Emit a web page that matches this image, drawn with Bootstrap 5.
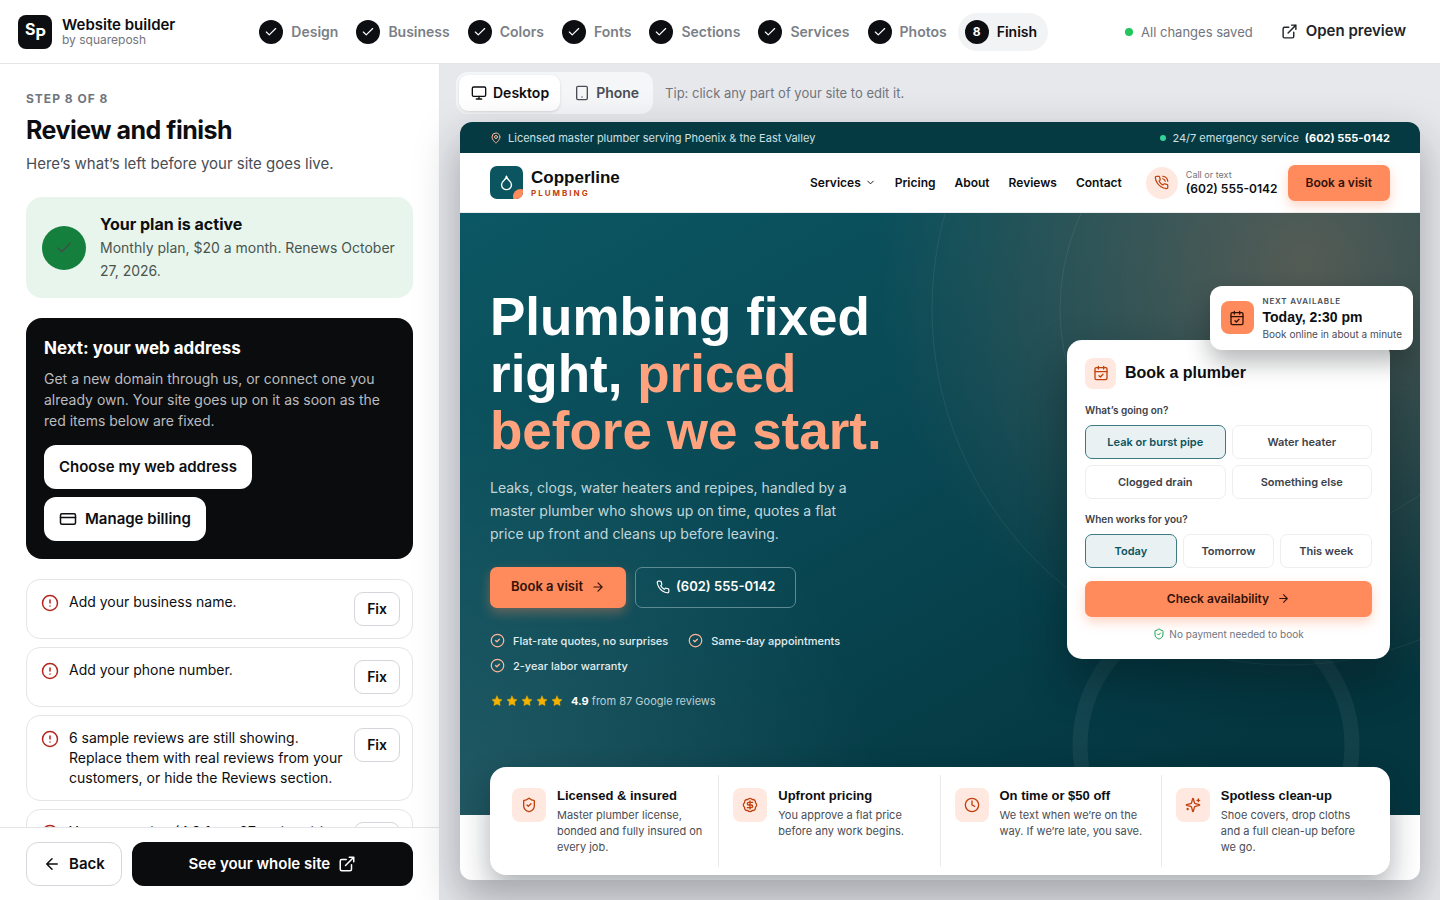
<!DOCTYPE html>
<html lang="en">
<head>
<meta charset="utf-8">
<meta name="viewport" content="width=device-width, initial-scale=1">
<title>Website builder</title>
<link rel="stylesheet" href="https://cdn.jsdelivr.net/npm/bootstrap@5.3.0/dist/css/bootstrap.min.css">
<style>
:root{--ink:#0d0e11;--muted:#71757d;--body:#494d55;--line:#e3e5e8;--teal:#0b5560;--orange:#ff8a5b;--rust:#c2410c;--peach:#ffe8df}
body{font-family:Inter,"Liberation Sans",sans-serif;color:var(--ink);background:#fff;font-size:14px;line-height:20px}
svg{display:block;flex:none;fill:none;stroke:currentColor;stroke-width:2;stroke-linecap:round;stroke-linejoin:round}
a{color:inherit;text-decoration:none}
.display-face{font-family:"Liberation Sans",Inter,sans-serif;font-weight:700}
/* app header */
.app-head{height:64px;border-bottom:1px solid var(--line);padding:0 18px}
.brand-mark{width:34px;height:34px;border-radius:8px;background:var(--ink);overflow:hidden}
.brand-mark text{font:700 16px Inter,sans-serif;fill:#fff;stroke:none}
.brand-name{font-size:15px;font-weight:600;line-height:17px}
.brand-sub{font-size:12px;line-height:14px;color:var(--muted)}
.step-link{padding:7px 11px 7px 7px;border-radius:19px;font-weight:600;color:#7b7f87;gap:8px}
.step-link.current{background:#f2f3f5;color:var(--ink)}
.step-dot{width:24px;height:24px;border-radius:50%;background:var(--ink);color:#fff;font-size:12px;font-weight:700}
.saved{font-size:13px;color:var(--muted);gap:8px}
.saved i{width:8px;height:8px;border-radius:50%;background:#22c55e}
.plain-btn{font-size:15px;font-weight:600;padding:8px 16px;gap:8px;border:0}
/* side panel */
.side{flex:0 0 440px;border-right:1px solid var(--line)}
.side-scroll{overflow:hidden;padding:26px 26px 0}
.eyebrow{font-size:12px;font-weight:700;letter-spacing:1px;line-height:18px;color:var(--muted)}
.side h1{font-size:25px;font-weight:700;line-height:32px;letter-spacing:-.5px;margin:6px 0}
.side-sub{font-size:15px;line-height:24px;color:var(--body);margin-bottom:21px}
.plan{background:#e8f5ec;border-radius:16px;padding:16px;gap:14px;margin-bottom:20px}
.plan-dot{width:44px;height:44px;border-radius:50%;background:#15803d;color:#3d5148;flex:none}
.plan-title{font-size:16px;font-weight:700;line-height:23px}
.plan-text{line-height:23px;color:#4a544f}
.next-card{background:#0b0c0e;color:#fff;border-radius:16px;padding:18px;margin-bottom:20px}
.next-card h2{font-size:17px;font-weight:700;line-height:24px;margin:0 0 8px}
.next-card p{line-height:21px;color:#b9bbbf;margin:0 0 14px}
.big-btn{height:44px;border-radius:12px;font-size:15px;font-weight:600;padding:0 14px;gap:8px}
.white-btn,.white-btn:hover{background:#fff;color:var(--ink)}
.dark-btn,.dark-btn:hover{background:#0b0c0e;color:#fff}
.outline-btn{border:1px solid #d3d6da;background:#fff;color:var(--ink)}
.issue{border:1px solid var(--line);border-radius:14px;padding:12px 12px 12px 14px;gap:10px}
.issue svg{color:#b3261e;margin-top:2px}
.issue .btn{height:34px;border-radius:9px;padding:0 12px;font-size:14px;font-weight:600;line-height:20px}
.side-foot{border-top:1px solid var(--line);padding:14px 26px;gap:10px;background:#fff}
/* preview */
.stage{background:#e7e8ec;padding:8px 20px 20px}
.tool-row{gap:12px;margin:0 0 8px -4px}
.view-switch{background:#f5f6f8;border-radius:12px;padding:3px}
.view-switch button{height:36px;border:0;background:none;border-radius:9px;padding:0 11px 0 12px;font-weight:600;color:var(--body);gap:6px}
.view-switch .on{background:#fff;color:var(--ink);box-shadow:0 1px 3px rgba(15,20,30,.14)}
.tip{font-size:13px;color:var(--muted)}
.frame{background:#fff;border-radius:12px;overflow:hidden;box-shadow:0 18px 44px rgba(22,26,36,.34)}
.pad-x{padding-left:30px;padding-right:30px}
.topline{height:31px;background:#053a42;color:#cfe0e3;font-size:11px}
.live-dot{width:6px;height:6px;border-radius:50%;background:#34d399}
.site-nav{height:60px;border-bottom:1px solid #eceef0;font-size:12px;font-weight:600}
.drop-mark{width:33px;height:33px;border-radius:7px;background:var(--teal);color:#fff;overflow:hidden;position:relative}
.drop-mark::after{content:"";position:absolute;right:-5px;bottom:-5px;width:15px;height:15px;border-radius:50%;background:var(--orange)}
.site-name{font-size:17px;line-height:20px}
.site-kind{font-size:8px;line-height:10px;font-weight:700;letter-spacing:2px;color:var(--rust)}
.call-dot{width:32px;height:32px;border-radius:50%;background:var(--peach);color:var(--rust)}
.call-label{font-size:9px;line-height:12px;font-weight:400;color:var(--muted)}
.call-num{font-size:12px;line-height:16px;font-weight:600}
.cta,.cta:hover{background:var(--orange);color:#331207;border-radius:7px;font-weight:600;box-shadow:0 5px 12px rgba(255,138,91,.35);gap:8px}
.site-nav .cta{font-size:12px;height:36px;padding:0 17px}
.hero{position:relative;min-height:602px;padding-top:74px;padding-bottom:106px;background:radial-gradient(circle 430px at 88% 8%,rgba(255,138,91,.31),rgba(255,138,91,0)),radial-gradient(circle 420px at 0 100%,rgba(255,255,255,.1),rgba(255,255,255,0)),linear-gradient(150deg,#0b5763 0%,#084753 45%,#04363f 85%)}
.rings{position:absolute;right:0;top:0;width:520px;height:100%;stroke:#fff}
.hero-copy{max-width:400px;position:relative;color:#fff}
.hero-copy h2{font-size:53px;line-height:57px;margin:0 0 17px;white-space:nowrap}
.hero-copy h2 span{color:#ffa27d}
.hero-copy p{font-size:14px;line-height:23px;color:#c3d7da;margin:0 0 22px;max-width:380px}
.hero-copy .btn{height:41px;font-size:13px;font-weight:600;padding:0 20px}
.ghost{border:1px solid #5d8b93;color:#fff;border-radius:7px;gap:6px}
.perks{gap:7px 20px;margin:24px 0 0;font-size:11px;font-weight:550;line-height:18px;color:#e3eef0}
.perks svg,.pin{color:#ffb598}
.safe{color:#16a34a}
.rating{font-size:11px;line-height:16px;color:#b9d0d4;margin-top:18px}
.stars{gap:3px;color:#f5b301;padding-left:1px}
.stars svg{fill:currentColor;stroke-width:1}
.booker{position:relative;flex:0 0 323px;margin-top:2px;background:#fff;border-radius:15px;padding:18px;box-shadow:0 22px 44px rgba(0,20,26,.42)}
.soft-ico{background:var(--peach);color:var(--rust);border-radius:8px;flex:none}
.booker h3{font-size:16px;line-height:20px;margin:0}
.booker legend{font-size:10px;font-weight:600;line-height:14px;color:#3c4149;margin:0 0 8px;float:none}
.picks{display:grid;gap:6px}
.pick{height:34px;border:1px solid #eceef0;border-radius:7px;font-size:11px;font-weight:600;color:#3c4149;line-height:32px;text-align:center;cursor:pointer}
.btn-check:checked+.pick{border-color:#3c7a84;background:#eaf1f3;color:var(--teal)}
.booker .cta{height:36px;font-size:12px;margin-top:13px}
.note{font-size:10px;line-height:14px;color:var(--muted);margin-top:10px}
.slot{position:absolute;right:-23px;top:-54px;background:#fff;border-radius:12px;padding:8px 11px;gap:9px;box-shadow:0 12px 24px rgba(10,15,20,.3);white-space:nowrap}
.slot .slot-ico{width:33px;height:33px;border-radius:8px;background:var(--orange);color:#331207}
.slot small{display:block;font-size:10px;line-height:16px;color:var(--body)}
.slot .slot-tag{font-size:8px;font-weight:600;letter-spacing:.8px;line-height:14px}
.slot strong{display:block;font-size:14px;line-height:18px}
.strip{position:relative;margin:-48px 30px 5px;background:#fff;border-radius:16px;padding:8px;box-shadow:0 14px 30px rgba(10,20,30,.34)}
.strip>div{padding:13px 14px 12px;gap:11px;min-width:0;flex:1 1 0}
.strip>div+div{border-left:1px solid #e9ebed}
.strip h4{font-size:13px;line-height:16px;margin:0 0 3px}
.strip p{font-size:11px;line-height:16px;color:var(--body);margin:0}
</style>
</head>
<body class="vh-100 d-flex flex-column overflow-hidden">
<svg width="0" height="0" class="position-absolute" aria-hidden="true">
<symbol id="check" viewBox="0 0 24 24"><path d="M20 6 9 17l-5-5"/></symbol>
<symbol id="ext" viewBox="0 0 24 24"><path d="M15 3h6v6M10 14 21 3M18 13v6a2 2 0 0 1-2 2H5a2 2 0 0 1-2-2V8a2 2 0 0 1 2-2h6"/></symbol>
<symbol id="alert" viewBox="0 0 24 24"><circle cx="12" cy="12" r="10"/><path d="M12 8v4M12 16h.01"/></symbol>
<symbol id="cal" viewBox="0 0 24 24"><path d="M8 2v4M16 2v4M3 10h18M9 16l2 2 4-4"/><rect x="3" y="4" width="18" height="18" rx="2"/></symbol>
<symbol id="right" viewBox="0 0 24 24"><path d="M5 12h14M12 5l7 7-7 7"/></symbol>
<symbol id="okc" viewBox="0 0 24 24"><circle cx="12" cy="12" r="10"/><path d="m9 12 2 2 4-4"/></symbol>
<symbol id="shield" viewBox="0 0 24 24"><path d="M20 13c0 5-3.500 7.500-7.660 8.950a1 1 0 0 1-.67-.01C7.500 20.500 4 18 4 13V6a1 1 0 0 1 1-1c2 0 4.500-1.200 6.240-2.720a1.170 1.170 0 0 1 1.520 0C14.510 3.810 17 5 19 5a1 1 0 0 1 1 1zM9 12l2 2 4-4"/></symbol>
<symbol id="phone" viewBox="0 0 24 24"><path d="M22 16.920v3a2 2 0 0 1-2.180 2 19.790 19.790 0 0 1-8.630-3.070 19.500 19.500 0 0 1-6-6 19.790 19.790 0 0 1-3.070-8.670A2 2 0 0 1 4.110 2h3a2 2 0 0 1 2 1.720c.127.960.361 1.903.700 2.810a2 2 0 0 1-.450 2.110L8.090 9.910a16 16 0 0 0 6 6l1.270-1.270a2 2 0 0 1 2.110-.450c.907.339 1.850.573 2.810.700A2 2 0 0 1 22 16.920z"/></symbol>
<symbol id="star" viewBox="0 0 24 24"><path d="m12 2 3.090 6.260L22 9.270l-5 4.870 1.180 6.880L12 17.770l-6.180 3.250L7 14.140 2 9.270l6.910-1.010z"/></symbol>
</svg>

<header class="app-head d-flex align-items-center justify-content-between flex-shrink-0">
  <a href="#" class="d-flex align-items-center" style="gap:10px">
    <span class="brand-mark"><svg width="34" height="34" viewBox="0 0 34 34"><text x="7" y="20">S<tspan dy="5">P</tspan></text></svg></span>
    <span><span class="d-block brand-name">Website builder</span><span class="d-block brand-sub">by squareposh</span></span>
  </a>
  <nav class="d-flex align-items-center" aria-label="Steps">
    <a href="#" class="step-link d-flex align-items-center"><span class="step-dot d-grid" style="place-items:center"><svg width="14" height="14"><use href="#check"/></svg></span>Design</a>
    <a href="#" class="step-link d-flex align-items-center"><span class="step-dot d-grid" style="place-items:center"><svg width="14" height="14"><use href="#check"/></svg></span>Business</a>
    <a href="#" class="step-link d-flex align-items-center"><span class="step-dot d-grid" style="place-items:center"><svg width="14" height="14"><use href="#check"/></svg></span>Colors</a>
    <a href="#" class="step-link d-flex align-items-center"><span class="step-dot d-grid" style="place-items:center"><svg width="14" height="14"><use href="#check"/></svg></span>Fonts</a>
    <a href="#" class="step-link d-flex align-items-center"><span class="step-dot d-grid" style="place-items:center"><svg width="14" height="14"><use href="#check"/></svg></span>Sections</a>
    <a href="#" class="step-link d-flex align-items-center"><span class="step-dot d-grid" style="place-items:center"><svg width="14" height="14"><use href="#check"/></svg></span>Services</a>
    <a href="#" class="step-link d-flex align-items-center"><span class="step-dot d-grid" style="place-items:center"><svg width="14" height="14"><use href="#check"/></svg></span>Photos</a>
    <a href="#" class="step-link current d-flex align-items-center" aria-current="step"><span class="step-dot d-grid" style="place-items:center">8</span>Finish</a>
  </nav>
  <div class="d-flex align-items-center" style="gap:12px">
    <span class="saved d-flex align-items-center"><i></i>All changes saved</span>
    <button type="button" class="btn plain-btn d-flex align-items-center"><svg width="17" height="17"><use href="#ext"/></svg>Open preview</button>
  </div>
</header>

<div class="d-flex flex-grow-1" style="min-height:0">
<aside class="side d-flex flex-column">
  <div class="side-scroll flex-grow-1">
    <div class="eyebrow">STEP 8 OF 8</div>
    <h1>Review and finish</h1>
    <p class="side-sub">Here’s what’s left before your site goes live.</p>
    <section class="plan d-flex align-items-center">
      <span class="plan-dot d-grid" style="place-items:center"><svg width="18" height="18"><use href="#check"/></svg></span>
      <div><div class="plan-title">Your plan is active</div><div class="plan-text">Monthly plan, $20 a month. Renews October 27, 2026.</div></div>
    </section>
    <section class="next-card">
      <h2>Next: your web address</h2>
      <p>Get a new domain through us, or connect one you already own. Your site goes up on it as soon as the red items below are fixed.</p>
      <div class="d-flex flex-wrap gap-2">
        <button type="button" class="btn big-btn white-btn">Choose my web address</button>
        <button type="button" class="btn big-btn white-btn d-flex align-items-center"><svg width="18" height="18" viewBox="0 0 24 24"><rect x="2" y="5" width="20" height="14" rx="2"/><path d="M2 10h20"/></svg>Manage billing</button>
      </div>
    </section>
    <ul class="list-unstyled d-flex flex-column gap-2 m-0">
      <li class="issue d-flex align-items-start"><svg width="18" height="18"><use href="#alert"/></svg><span class="flex-grow-1">Add your business name.</span><button type="button" class="btn outline-btn">Fix</button></li>
      <li class="issue d-flex align-items-start"><svg width="18" height="18"><use href="#alert"/></svg><span class="flex-grow-1">Add your phone number.</span><button type="button" class="btn outline-btn">Fix</button></li>
      <li class="issue d-flex align-items-start"><svg width="18" height="18"><use href="#alert"/></svg><span class="flex-grow-1">6 sample reviews are still showing. Replace them with real reviews from your customers, or hide the Reviews section.</span><button type="button" class="btn outline-btn">Fix</button></li>
      <li class="issue d-flex align-items-start"><svg width="18" height="18"><use href="#alert"/></svg><span class="flex-grow-1">Your star rating (4.9 from 87 reviews) is</span><button type="button" class="btn outline-btn">Fix</button></li>
    </ul>
  </div>
  <div class="side-foot d-flex flex-shrink-0">
    <button type="button" class="btn big-btn outline-btn d-flex align-items-center" style="padding:0 16px"><svg width="18" height="18" viewBox="0 0 24 24"><path d="M19 12H5M12 19l-7-7 7-7"/></svg>Back</button>
    <button type="button" class="btn big-btn dark-btn d-flex align-items-center justify-content-center flex-grow-1"><span>See your whole site</span><svg width="18" height="18"><use href="#ext"/></svg></button>
  </div>
</aside>

<main class="stage d-flex flex-column flex-grow-1" style="min-width:0">
  <div class="tool-row d-flex align-items-center">
    <div class="view-switch d-flex">
      <button type="button" class="on d-flex align-items-center"><svg width="16" height="16" viewBox="0 0 24 24"><rect x="2" y="3" width="20" height="14" rx="2"/><path d="M8 21h8M12 17v4"/></svg>Desktop</button>
      <button type="button" class="d-flex align-items-center" style="margin-left:2px"><svg width="16" height="16" viewBox="0 0 24 24"><rect x="4" y="2" width="16" height="20" rx="2"/><path d="M12 18h.01"/></svg>Phone</button>
    </div>
    <span class="tip">Tip: click any part of your site to edit it.</span>
  </div>

  <div class="frame flex-grow-1" style="min-height:0">
    <div class="topline pad-x d-flex align-items-center justify-content-between">
      <span class="d-flex align-items-center" style="gap:6px"><svg class="pin" width="12" height="12" viewBox="0 0 24 24"><path d="M20 10c0 5-5.500 10.200-7.400 11.800a1 1 0 0 1-1.200 0C9.500 20.200 4 15 4 10a8 8 0 0 1 16 0"/><circle cx="12" cy="10" r="3"/></svg>Licensed master plumber serving Phoenix &amp; the East Valley</span>
      <span class="d-flex align-items-center" style="gap:6px"><i class="live-dot"></i>24/7 emergency service <a href="#" class="fw-bold text-white">(602) 555-0142</a></span>
    </div>
    <div class="site-nav pad-x d-flex align-items-center">
      <a href="#" class="d-flex align-items-center gap-2 me-auto">
        <span class="drop-mark d-grid" style="place-items:center"><svg width="17" height="17" viewBox="0 0 24 24"><path d="M12 22a7 7 0 0 0 7-7c0-2-1-3.900-3-5.500s-3.500-4-4-6.500c-.5 2.500-2 4.900-4 6.500C6 11.100 5 13 5 15a7 7 0 0 0 7 7z"/></svg></span>
        <span><span class="d-block site-name display-face">Copperline</span><span class="d-block site-kind">PLUMBING</span></span>
      </a>
      <nav class="d-flex align-items-center" style="gap:19px">
        <a href="#" class="d-flex align-items-center" style="gap:4px">Services <svg width="11" height="11" viewBox="0 0 24 24"><path d="m6 9 6 6 6-6"/></svg></a>
        <a href="#">Pricing</a><a href="#">About</a><a href="#">Reviews</a><a href="#">Contact</a>
      </nav>
      <a href="#" class="d-flex align-items-center gap-2 ms-4">
        <span class="call-dot d-grid" style="place-items:center"><svg width="15" height="15" viewBox="0 0 24 24"><use href="#phone" width="24" height="24"/><path d="M14.050 2a9 9 0 0 1 8 7.940M14.050 6A5 5 0 0 1 18 10"/></svg></span>
        <span><span class="d-block call-label">Call or text</span><span class="d-block call-num">(602) 555-0142</span></span>
      </a>
      <button type="button" class="btn cta" style="margin-left:10px">Book a visit</button>
    </div>
    <section class="hero pad-x d-flex align-items-center justify-content-between">
      <svg class="rings" viewBox="0 0 520 602" preserveAspectRatio="xMaxYMin slice" aria-hidden="true"><g stroke-width="1" stroke-opacity=".07"><circle cx="388" cy="96" r="356"/><circle cx="388" cy="96" r="228"/></g><circle cx="316" cy="532" r="136" stroke-width="15" stroke-opacity=".06"/></svg>
      <div class="hero-copy">
        <h2 class="display-face">Plumbing fixed<br>right, <span>priced<br>before we start.</span></h2>
        <p>Leaks, clogs, water heaters and repipes, handled by a master plumber who shows up on time, quotes a flat price up front and cleans up before leaving.</p>
        <div class="d-flex" style="gap:9px">
          <button type="button" class="btn cta d-flex align-items-center">Book a visit<svg width="14" height="14"><use href="#right"/></svg></button>
          <a href="#" class="btn ghost d-flex align-items-center"><svg width="14" height="14"><use href="#phone"/></svg>(602) 555-0142</a>
        </div>
        <ul class="perks list-unstyled d-flex flex-wrap">
          <li class="d-flex align-items-center gap-2"><svg width="15" height="15"><use href="#okc"/></svg>Flat-rate quotes, no surprises</li>
          <li class="d-flex align-items-center gap-2"><svg width="15" height="15"><use href="#okc"/></svg>Same-day appointments</li>
          <li class="d-flex align-items-center gap-2"><svg width="15" height="15"><use href="#okc"/></svg>2-year labor warranty</li>
        </ul>
        <div class="rating d-flex align-items-center gap-2">
          <span class="stars d-flex"><svg width="12" height="12"><use href="#star"/></svg><svg width="12" height="12"><use href="#star"/></svg><svg width="12" height="12"><use href="#star"/></svg><svg width="12" height="12"><use href="#star"/></svg><svg width="12" height="12"><use href="#star"/></svg></span>
          <span><b class="text-white">4.9</b> from 87 Google reviews</span>
        </div>
      </div>
      <form class="booker">
        <div class="d-flex align-items-center" style="gap:9px;margin-bottom:14px"><span class="soft-ico d-grid" style="width:31px;height:31px;place-items:center"><svg width="16" height="16"><use href="#cal"/></svg></span><h3 class="display-face">Book a plumber</h3></div>
        <fieldset><legend>What’s going on?</legend>
          <div class="picks" style="grid-template-columns:1fr 1fr">
            <div class="d-grid"><input class="btn-check" type="radio" name="job" id="j1" checked><label class="pick" for="j1">Leak or burst pipe</label></div>
            <div class="d-grid"><input class="btn-check" type="radio" name="job" id="j2"><label class="pick" for="j2">Water heater</label></div>
            <div class="d-grid"><input class="btn-check" type="radio" name="job" id="j3"><label class="pick" for="j3">Clogged drain</label></div>
            <div class="d-grid"><input class="btn-check" type="radio" name="job" id="j4"><label class="pick" for="j4">Something else</label></div>
          </div>
        </fieldset>
        <fieldset style="margin-top:13px"><legend>When works for you?</legend>
          <div class="picks" style="grid-template-columns:1fr 1fr 1fr">
            <div class="d-grid"><input class="btn-check" type="radio" name="day" id="d1" checked><label class="pick" for="d1">Today</label></div>
            <div class="d-grid"><input class="btn-check" type="radio" name="day" id="d2"><label class="pick" for="d2">Tomorrow</label></div>
            <div class="d-grid"><input class="btn-check" type="radio" name="day" id="d3"><label class="pick" for="d3">This week</label></div>
          </div>
        </fieldset>
        <button type="button" class="btn cta w-100 d-flex align-items-center justify-content-center"><span>Check availability</span><svg width="13" height="13"><use href="#right"/></svg></button>
        <div class="note d-flex align-items-center justify-content-center gap-1"><svg class="safe" width="12" height="12"><use href="#shield"/></svg>No payment needed to book</div>
        <div class="slot d-flex align-items-center"><span class="slot-ico d-grid" style="place-items:center"><svg width="16" height="16"><use href="#cal"/></svg></span><div><small class="slot-tag">NEXT AVAILABLE</small><strong class="display-face">Today, 2:30 pm</strong><small>Book online in about a minute</small></div></div>
      </form>
    </section>
    <section class="strip d-flex">
      <div class="d-flex align-items-start"><span class="soft-ico d-grid" style="width:34px;height:34px;place-items:center"><svg width="16" height="16"><use href="#shield"/></svg></span><div><h4 class="display-face">Licensed &amp; insured</h4><p>Master plumber license, bonded and fully insured on every job.</p></div></div>
      <div class="d-flex align-items-start"><span class="soft-ico d-grid" style="width:34px;height:34px;place-items:center"><svg width="16" height="16" viewBox="0 0 24 24"><path d="M3.850 8.620a4 4 0 0 1 4.780-4.770 4 4 0 0 1 6.740 0 4 4 0 0 1 4.780 4.780 4 4 0 0 1 0 6.740 4 4 0 0 1-4.770 4.780 4 4 0 0 1-6.750 0 4 4 0 0 1-4.780-4.770 4 4 0 0 1 0-6.760zM16 8h-6a2 2 0 1 0 0 4h4a2 2 0 1 1 0 4H8M12 18V6"/></svg></span><div><h4 class="display-face">Upfront pricing</h4><p>You approve a flat price before any work begins.</p></div></div>
      <div class="d-flex align-items-start"><span class="soft-ico d-grid" style="width:34px;height:34px;place-items:center"><svg width="16" height="16" viewBox="0 0 24 24"><circle cx="12" cy="12" r="10"/><path d="M12 6v6l4 2"/></svg></span><div><h4 class="display-face">On time or $50 off</h4><p>We text when we’re on the way. If we’re late, you save.</p></div></div>
      <div class="d-flex align-items-start"><span class="soft-ico d-grid" style="width:34px;height:34px;place-items:center"><svg width="16" height="16" viewBox="0 0 24 24"><path d="M9.940 15.500A2 2 0 0 0 8.500 14.060l-6.140-1.580a.5.5 0 0 1 0-.96L8.500 9.940A2 2 0 0 0 9.940 8.500l1.580-6.140a.5.5 0 0 1 .96 0l1.580 6.140a2 2 0 0 0 1.440 1.440l6.140 1.580a.5.5 0 0 1 0 .96l-6.140 1.580a2 2 0 0 0-1.440 1.440l-1.580 6.140a.5.5 0 0 1-.96 0zM20 3v4M22 5h-4M4 17v2M5 18H3"/></svg></span><div><h4 class="display-face">Spotless clean-up</h4><p>Shoe covers, drop cloths and a full clean-up before we go.</p></div></div>
    </section>
  </div>
</main>
</div>
<script src="https://cdn.jsdelivr.net/npm/bootstrap@5.3.0/dist/js/bootstrap.bundle.min.js"></script>
</body>
</html>
